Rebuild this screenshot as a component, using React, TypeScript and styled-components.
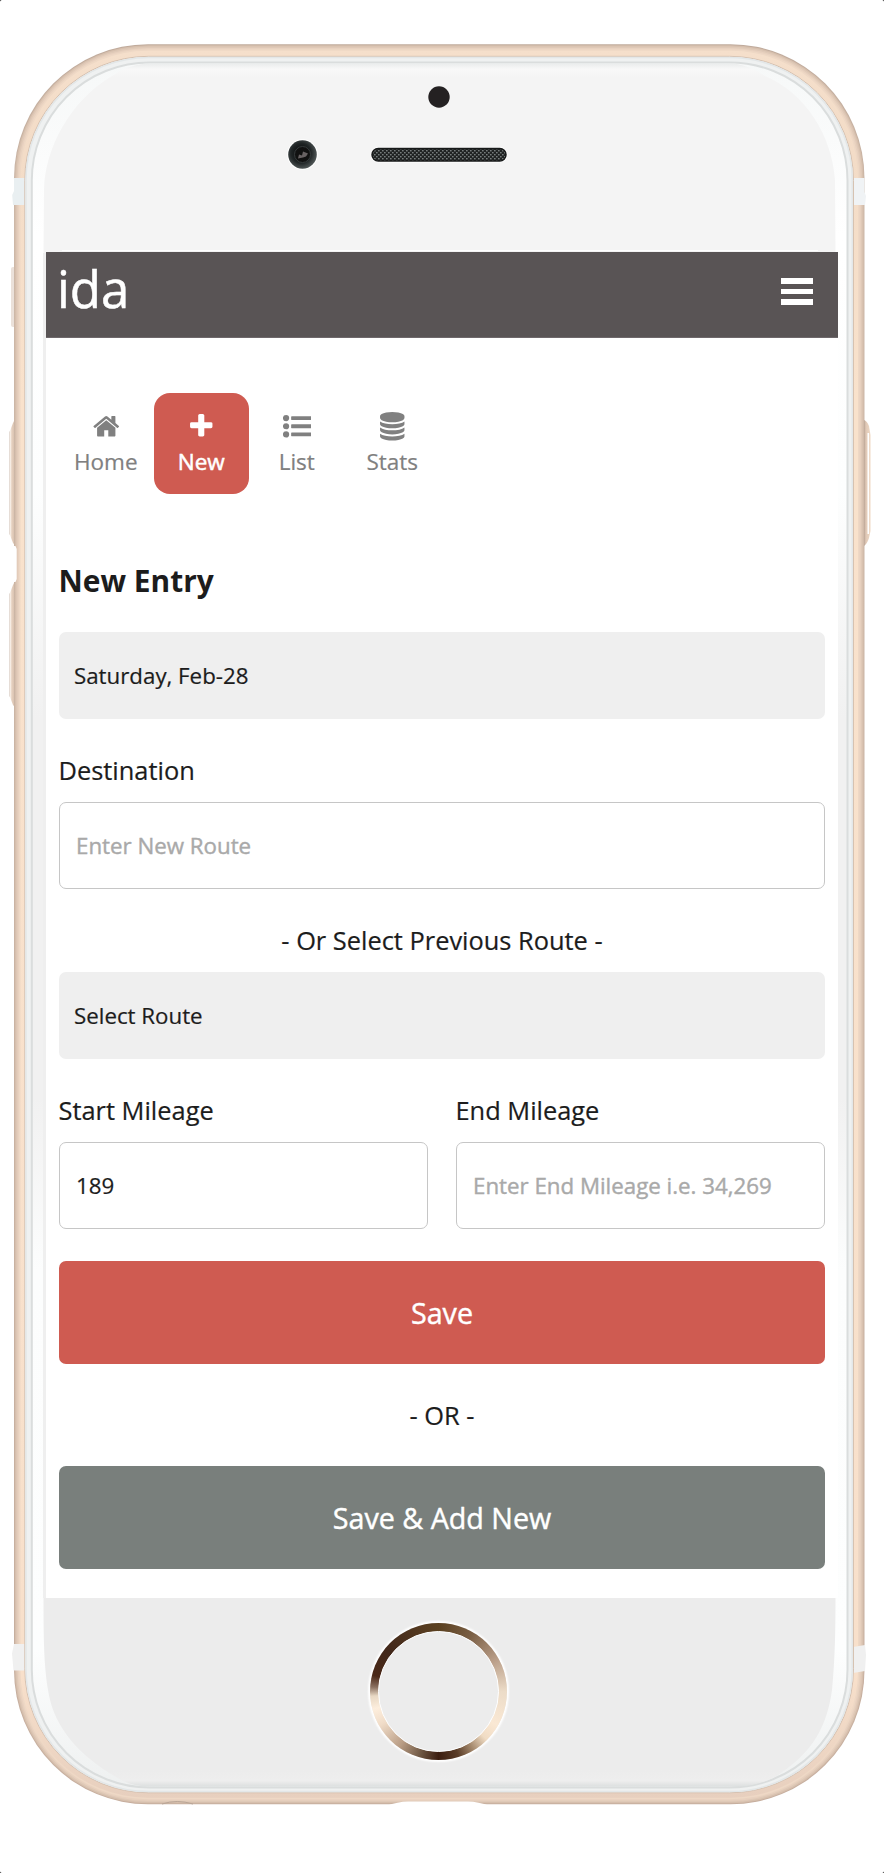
import React from "react";
import styled, { createGlobalStyle } from "styled-components";

const GlobalStyle = createGlobalStyle`
  * { box-sizing: border-box; }
  body {
    margin: 0;
    background: #fff;
    color: #1c1c1c;
    font-family: "Open Sans", "Noto Sans", sans-serif;
  }
`;

const Page = styled.div`
  position: relative;
  display: flex;
  flex-direction: column;
  width: 884px;
  height: 1873px;
  padding: 252px 46px 0;
  overflow: hidden;
`;

const Device = styled.svg`
  position: absolute;
  inset: 0;
  display: block;
`;

const Screen = styled.main`
  position: relative;
  width: 792px;
  height: 1346px;
  background: #fff;
`;

const Header = styled.header`
  display: flex;
  justify-content: space-between;
  height: 86px;
  padding: 0 25px 0 11px;
  background: #595455;
  border-bottom: 1px solid #6e686b;
`;

const Brand = styled.div`
  color: #fff;
  font-size: 51px;
  line-height: 72px;
  -webkit-text-stroke: 0.5px #fff;
`;

const MenuButton = styled.button`
  display: flex;
  flex-direction: column;
  gap: 5px;
  width: 32px;
  height: 27px;
  margin-top: 26px;
  padding: 0;
  border: 0;
  background: none;
`;

const MenuBar = styled.span`
  flex: 1;
  background: #fff;
`;

const Content = styled.div`
  padding: 55px 13px 0;
`;

const Nav = styled.nav`
  display: flex;
  margin: 0 0 67px -1px;
`;

const NavItem = styled.a<{ $active?: boolean }>`
  display: flex;
  flex-direction: column;
  align-items: center;
  width: 95.5px;
  height: 101px;
  padding-top: 19px;
  border-radius: 16px;
  background: ${(p) => (p.$active ? "#cf5b51" : "transparent")};
  color: ${(p) => (p.$active ? "#fff" : "#808080")};
  font-size: 22.5px;
  line-height: 32px;
  -webkit-text-stroke: ${(p) => (p.$active ? "0.5px #fff" : "0.2px #808080")};
`;

const NavIcon = styled.svg`
  width: 28.5px;
  height: 28.5px;
  margin-bottom: 5.2px;
  fill: currentColor;
  stroke: none;
`;

const Title = styled.h1`
  margin: 0 0 31px -0.5px;
  font-size: 29.9px;
  font-weight: 700;
  line-height: 40px;
`;

const SelectBox = styled.button`
  display: block;
  width: 100%;
  height: 87px;
  padding: 0 15px;
  border: 0;
  border-radius: 7px;
  background: #efefef;
  color: #1c1c1c;
  font: 22.3px/87px "Open Sans", "Noto Sans", sans-serif;
  text-align: left;
  -webkit-text-stroke: 0.2px #1c1c1c;
`;

const Label = styled.label<{ $center?: boolean }>`
  display: block;
  margin: 31px 0 12px ${(p) => (p.$center ? "0" : "-0.5px")};
  font-size: 25.4px;
  line-height: 40px;
  text-align: ${(p) => (p.$center ? "center" : "left")};
  -webkit-text-stroke: 0.2px #1c1c1c;
`;

const Input = styled.input`
  display: block;
  width: 100%;
  height: 87px;
  padding: 0 16px;
  border: 1px solid #c6c6c6;
  border-radius: 7px;
  background: #fff;
  color: #1c1c1c;
  font: 22.3px "Open Sans", "Noto Sans", sans-serif;
  outline: 0;
  -webkit-text-stroke: 0.2px #1c1c1c;

  &::placeholder {
    color: #a9a9a9;
    opacity: 1;
    -webkit-text-stroke: 0.4px #a9a9a9;
  }
`;

const Columns = styled.div`
  display: grid;
  grid-template-columns: 1fr 1fr;
  gap: 28px;
  margin-bottom: 32px;
`;

const Button = styled.button<{ $muted?: boolean }>`
  display: block;
  width: 100%;
  height: 103px;
  padding: 0 0 1px;
  border: 0;
  border-radius: 7px;
  background: ${(p) => (p.$muted ? "#797f7c" : "#cf5b51")};
  color: #fff;
  font: 28.7px/101px "Open Sans", "Noto Sans", sans-serif;
  -webkit-text-stroke: 0.4px #fff;
`;

const Divider = styled.div`
  margin: 31px 0;
  font-size: 25.4px;
  line-height: 40px;
  text-align: center;
  -webkit-text-stroke: 0.2px #1c1c1c;
`;

const HomeButton = styled.div`
  position: relative;
  width: 137px;
  height: 137px;
  margin: 25px 0 0 323.5px;
  padding: 8px;
  border-radius: 50%;
  box-shadow: 0 0 2px 2px #fff;
  background: conic-gradient(
    #5a4020, #7a5f45 30deg, #b89c86 60deg, #ecdcc8 90deg, #fae8d4 120deg,
    #f0dcc4 135deg, #a08468 150deg, #5a3d28 163deg, #3c1e10 180deg,
    #6b5440 195deg, #b89c84 215deg, #f0dcc8 240deg, #fdeedd 255deg,
    #e8d8c4 266deg, #8a7060 274deg, #4a2818 284deg, #42281a 310deg,
    #553a20 345deg, #5a4020
  );
`;

const HomeButtonFace = styled.div`
  height: 100%;
  border: 1.5px solid #fff;
  border-radius: 50%;
  background: #ececec;
`;

const frameLayers = [
  { inset: 0, fill: "url(#goldEdge)" },
  { inset: 1, fill: "#d6bfad" },
  { inset: 2.2, fill: "#dfc9b7" },
  { inset: 3.6, fill: "#e8d1bf" },
  { inset: 5, fill: "#eed8c5" },
  { inset: 6.5, fill: "url(#gold)" },
];

function PhoneBody() {
  return (
    <Device width="884" height="1873" viewBox="0 0 884 1873" aria-hidden="true">
      <defs>
        <linearGradient id="gold" x1="0" y1="0" x2="0" y2="1">
          <stop offset="0" stopColor="#f5dfcb" />
          <stop offset=".06" stopColor="#f3dcc7" />
          <stop offset=".2" stopColor="#f9e2cc" />
          <stop offset=".93" stopColor="#f8e0cb" />
          <stop offset="1" stopColor="#e7cfbe" />
        </linearGradient>
        <linearGradient id="goldEdge" x1="0" y1="0" x2="0" y2="1">
          <stop offset="0" stopColor="#bfaa9b" />
          <stop offset=".1" stopColor="#cdb8a8" />
          <stop offset="1" stopColor="#c6ae9e" />
        </linearGradient>
        <linearGradient id="glass" x1="0" y1="0" x2="0" y2="1">
          <stop offset="0" stopColor="#f6f8f8" />
          <stop offset=".1" stopColor="#fff" />
          <stop offset=".25" stopColor="#fdfefe" />
          <stop offset=".38" stopColor="#f1f1f1" />
          <stop offset=".6" stopColor="#f1f1f1" />
          <stop offset=".7" stopColor="#fcfdfd" />
          <stop offset=".92" stopColor="#fdfefe" />
          <stop offset="1" stopColor="#eef0f0" />
        </linearGradient>
        <linearGradient id="topPanel" x1="0" y1="63" x2="0" y2="78" gradientUnits="userSpaceOnUse">
          <stop offset="0" stopColor="#e9ebeb" />
          <stop offset=".4" stopColor="#f8f8f8" />
          <stop offset="1" stopColor="#f4f4f4" />
        </linearGradient>
        <linearGradient id="bottomPanel" x1="0" y1="1770" x2="0" y2="1788" gradientUnits="userSpaceOnUse">
          <stop offset="0" stopColor="#ececec" />
          <stop offset=".6" stopColor="#eeeeee" />
          <stop offset="1" stopColor="#d8dcdc" />
        </linearGradient>
        <linearGradient id="sideKey" x1="0" y1="0" x2="1" y2="0">
          <stop offset="0" stopColor="#cdbbae" />
          <stop offset=".14" stopColor="#f8efe7" />
          <stop offset=".3" stopColor="#e6d1c0" />
          <stop offset=".6" stopColor="#dac3b1" />
          <stop offset="1" stopColor="#ad9688" />
        </linearGradient>
        <linearGradient id="powerKey" x1="0" y1="0" x2="1" y2="0">
          <stop offset="0" stopColor="#b7a090" />
          <stop offset=".35" stopColor="#b7a090" />
          <stop offset=".5" stopColor="#dfc8b6" />
          <stop offset="1" stopColor="#efd9c5" />
        </linearGradient>
        <radialGradient id="lens" cx=".45" cy=".45" r=".6">
          <stop offset="0" stopColor="#4b4749" />
          <stop offset=".3" stopColor="#111314" />
          <stop offset=".58" stopColor="#202526" />
          <stop offset="1" stopColor="#596060" />
        </radialGradient>
        <pattern id="mesh" width="4" height="4" patternUnits="userSpaceOnUse">
          <rect width="4" height="4" fill="#202323" />
          <rect width="1.6" height="1.4" fill="#777d7d" />
          <rect x="2" y="2" width="1.6" height="1.4" fill="#777d7d" />
        </pattern>
      </defs>

      <path d="M0 0h1.6L0 1.6zM884 0v1.6L882.4 0zM0 1873v-1.6l1.6 1.6zM884 1873h-1.6l1.6-1.6z" fill="#555" />

      {/* side keys */}
      <rect x="11" y="267" width="6" height="60" rx="2" fill="#ebe1da" />
      <path d="M17 419q-2 0-4 4l-3.500 9v102l3.500 9q2 3 4 3z" fill="url(#sideKey)" />
      <path d="M17 581q-2 0-4 4l-3.500 9v102l3.500 9q2 3 4 3z" fill="url(#sideKey)" />
      <path d="M861 420h3q3 1 5 6l1.500 9v96l-1.500 7q-2 6-5 8h-3z" fill="url(#powerKey)" />
      <rect x="867.5" y="433" width="1.600" height="101" fill="#fff" />

      {/* gold frame */}
      {frameLayers.map(({ inset, fill }) => (
        <rect
          key={inset}
          x={14 + inset}
          y={44.3 + inset}
          width={850.5 - inset * 2}
          height={1760 - inset * 2}
          rx={134 - inset}
          fill={fill}
        />
      ))}
      <path d="M13 546h2.5l1.2 3v30l-1.2 3H13z" fill="#fff" />
      <path d="M386 1806q12-4.500 22-4.500h60q10 0 22 4.500z" fill="#fff" />
      <path d="M162 1804q15-5 31 0" fill="none" stroke="#b9a596" strokeWidth="1" />

      {/* antenna bands */}
      <path d="M14 178h11v27H13l-.8-10 1.8-4z" fill="#e9eff1" />
      <path d="M853 178h11.5v14l1.5 4-1 9H853z" fill="#f0f3f5" />
      <path d="M14 1644h11v26.500H13.500l-1.500-17z" fill="#f0f0f0" />
      <path d="M853 1647l12-2 1 10-1 16-12 2z" fill="#f0f0f0" />

      {/* white rim and glass */}
      <rect x="24.800" y="56.300" width="828.700" height="1736.500" rx="124" fill="#eff1f1" stroke="#d5c0af" />
      <rect x="26" y="57.500" width="826.300" height="1734.100" rx="122.800" fill="none" stroke="#e3e7e8" strokeWidth="1.500" />
      <rect x="31.800" y="62.500" width="815.700" height="1725" rx="118" fill="url(#glass)" stroke="#dadddd" strokeWidth="2" />

      <path d="M43.500 253 44 190C45 148 70 101 112 76Q126 66 145 63.500H735Q750 66 765 76C805 93 832 135 835 180L835.500 253z" fill="url(#topPanel)" />
      <path d="M43.500 1597C43.500 1640 44 1665 48 1690C54 1730 82 1757 116 1777Q128 1785 145 1786.500H740Q765 1784 778 1775C805 1757 826 1735 832 1690C835 1660 835.500 1630 835.500 1597z" fill="url(#bottomPanel)" />
      <path d="M62 250.500H818" stroke="#fff" />
      <path d="M44.500 253V1598" stroke="#efefef" strokeWidth="3" />

      {/* sensor, camera and earpiece */}
      <circle cx="439" cy="97" r="10.700" fill="#242122" />
      <circle cx="302.500" cy="154.500" r="15.300" fill="#fff" />
      <circle cx="302.500" cy="154.500" r="14.300" fill="url(#lens)" />
      <circle cx="302.500" cy="154.500" r="8" fill="#111" stroke="#363b3c" />
      <path d="M298 158.500l1-4 3 1 1-4 5 2-2 3-3 1z" fill="#686263" />
      <rect x="370.500" y="147" width="137" height="15.500" rx="7.750" fill="#fff" />
      <rect x="372" y="148.500" width="134" height="12.500" rx="6.250" fill="url(#mesh)" stroke="#171919" strokeWidth="1.500" />
    </Device>
  );
}

const icons = {
  home: (
    <path d="M1472 992v480q0 26-19 45t-45 19h-384v-384h-256v384h-384q-26 0-45-19t-19-45v-480q0-1 .5-3t.5-3l575-474 575 474q1 2 1 6zm223-69l-62 74q-8 9-21 11h-3q-13 0-21-7l-692-577-692 577q-12 8-24 7-13-2-21-11l-62-74q-8-10-7-23.500t11-21.500l719-599q32-26 76-26t76 26l244 204v-195q0-14 9-23t23-9h192q14 0 23 9t9 23v408l219 182q10 8 11 21.500t-7 23.500z" />
  ),
  plus: (
    <path d="M1600 736v192q0 40-28 68t-68 28h-416v416q0 40-28 68t-68 28h-192q-40 0-68-28t-28-68v-416h-416q-40 0-68-28t-28-68v-192q0-40 28-68t68-28h416v-416q0-40 28-68t68-28h192q40 0 68 28t28 68v416h416q40 0 68 28t28 68z" />
  ),
  list: (
    <>
      {[384, 896, 1408].map((y) => (
        <React.Fragment key={y}>
          <circle cx="192" cy={y} r="196" />
          <rect x="512" y={y - 120} width="1280" height="240" rx="30" />
        </React.Fragment>
      ))}
    </>
  ),
  stats: (
    <path d="M896 768q237 0 443-43t325-127v170q0 69-103 128t-280 93.500-385 34.500-385-34.500-280-93.500-103-128v-170q119 84 325 127t443 43zm0 768q237 0 443-43t325-127v170q0 69-103 128t-280 93.500-385 34.500-385-34.500-280-93.500-103-128v-170q119 84 325 127t443 43zm0-384q237 0 443-43t325-127v170q0 69-103 128t-280 93.500-385 34.500-385-34.500-280-93.500-103-128v-170q119 84 325 127t443 43zm0-1152q208 0 385 34.500t280 93.500 103 128v128q0 69-103 128t-280 93.500-385 34.500-385-34.500-280-93.500-103-128v-128q0-69 103-128t280-93.500 385-34.500z" />
  ),
};

const navItems: { label: string; icon: keyof typeof icons; active?: boolean }[] = [
  { label: "Home", icon: "home" },
  { label: "New", icon: "plus", active: true },
  { label: "List", icon: "list" },
  { label: "Stats", icon: "stats" },
];

export default function App() {
  return (
    <>
      <GlobalStyle />
      <Page>
        <PhoneBody />
        <Screen>
          <Header>
            <Brand>ida</Brand>
            <MenuButton aria-label="Menu">
              <MenuBar />
              <MenuBar />
              <MenuBar />
            </MenuButton>
          </Header>
          <Content>
            <Nav>
              {navItems.map((item) => (
                <NavItem key={item.label} $active={item.active}>
                  <NavIcon viewBox="0 0 1792 1792">{icons[item.icon]}</NavIcon>
                  {item.label}
                </NavItem>
              ))}
            </Nav>
            <Title>New Entry</Title>
            <SelectBox>Saturday, Feb-28</SelectBox>
            <Label htmlFor="destination">Destination</Label>
            <Input id="destination" placeholder="Enter New Route" />
            <Label as="div" $center>- Or Select Previous Route -</Label>
            <SelectBox>Select Route</SelectBox>
            <Columns>
              <div>
                <Label htmlFor="start">Start Mileage</Label>
                <Input id="start" defaultValue="189" />
              </div>
              <div>
                <Label htmlFor="end">End Mileage</Label>
                <Input id="end" placeholder="Enter End Mileage i.e. 34,269" />
              </div>
            </Columns>
            <Button>Save</Button>
            <Divider>- OR -</Divider>
            <Button $muted>Save &amp; Add New</Button>
          </Content>
        </Screen>
        <HomeButton>
          <HomeButtonFace />
        </HomeButton>
      </Page>
    </>
  );
}
